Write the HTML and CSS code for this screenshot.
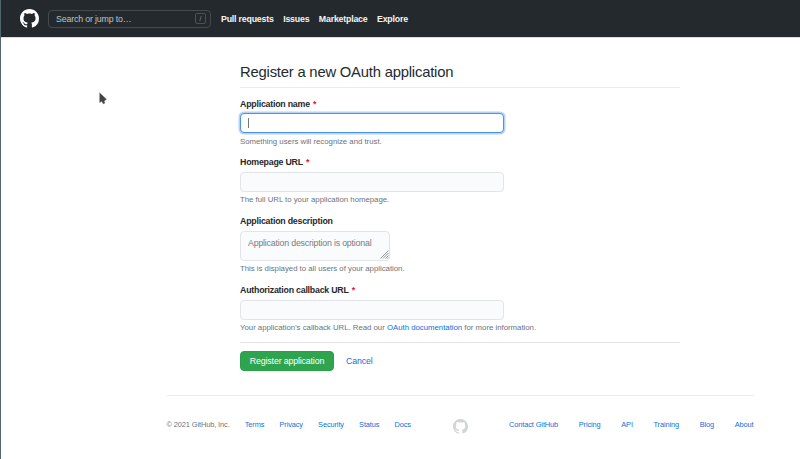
FILE: index.html
```html
<!DOCTYPE html>
<html lang="en">
<head>
<meta charset="utf-8">
<title>Register a new OAuth application</title>
<link rel="stylesheet" href="styles.css">
</head>
<body>
<svg width="0" height="0" class="defs"><symbol id="mark" viewBox="0 0 16 16"><path fill="currentColor" fill-rule="evenodd" d="M8 0C3.58 0 0 3.58 0 8c0 3.54 2.29 6.53 5.47 7.59.4.07.55-.17.55-.38 0-.19-.01-.82-.01-1.49-2.01.37-2.53-.49-2.69-.94-.09-.23-.48-.94-.82-1.13-.28-.15-.68-.52-.01-.53.63-.01 1.08.58 1.23.82.72 1.21 1.87.87 2.33.66.07-.52.28-.87.51-1.07-1.78-.2-3.64-.89-3.64-3.95 0-.87.31-1.59.82-2.15-.08-.2-.36-1.02.08-2.12 0 0 .67-.21 2.2.82.64-.18 1.32-.27 2-.27s1.36.09 2 .27c1.53-1.04 2.2-.82 2.2-.82.44 1.1.16 1.92.08 2.12.51.56.82 1.27.82 2.15 0 3.07-1.87 3.75-3.65 3.95.29.25.54.73.54 1.48 0 1.07-.01 1.93-.01 2.2 0 .21.15.46.55.38A8.01 8.01 0 0 0 16 8c0-4.42-3.58-8-8-8z"/></symbol></svg>
<header class="header">
  <svg class="logo"><use href="#mark"/></svg>
  <div class="search"><span>Search or jump to…</span><kbd>/</kbd></div>
  <nav class="nav"><a>Pull requests</a><a>Issues</a><a>Marketplace</a><a>Explore</a></nav>
</header>
<main class="form">
  <h1>Register a new OAuth application</h1>
  <section class="group first">
    <label>Application name <b>*</b></label>
    <div class="input focused"><i class="caret"></i></div>
    <p>Something users will recognize and trust.</p>
  </section>
  <section class="group">
    <label>Homepage URL <b>*</b></label>
    <div class="input"></div>
    <p>The full URL to your application homepage.</p>
  </section>
  <section class="group description">
    <label>Application description</label>
    <div class="textarea">Application description is optional
      <svg class="grip" viewBox="0 0 9 9"><path d="M0.5 8.5 8.5 .5M3 8.5 8.5 3M5.5 8.5 8.5 5.5M7.5 8.5l1-1"/></svg>
    </div>
    <p>This is displayed to all users of your application.</p>
  </section>
  <section class="group">
    <label>Authorization callback URL <b>*</b></label>
    <div class="input"></div>
    <p>Your application’s callback URL. Read our <a>OAuth documentation</a> for more information.</p>
  </section>
  <div class="actions"><button>Register application</button><a>Cancel</a></div>
</main>
<footer class="footer">
  <div class="left"><span>© 2021 GitHub, Inc.</span><a>Terms</a><a>Privacy</a><a>Security</a><a>Status</a><a>Docs</a></div>
  <svg class="footmark"><use href="#mark"/></svg>
  <div class="right"><a>Contact GitHub</a><a>Pricing</a><a>API</a><a>Training</a><a>Blog</a><a>About</a></div>
</footer>
<svg class="pointer" viewBox="0 0 8 13"><path d="M.5.5v10.2l2.2-1.2 1.5 2.6 1.8-.9-.6-2.2 2.2-1.8z"/></svg>
</body>
</html>
```
FILE: styles.css
```css
* { box-sizing: border-box; }
body {
  margin: 0;
  height: 459px;
  overflow: hidden;
  background: #fff;
  border-left: 1px solid #52676a;
  font: 8.8px/12px "Liberation Sans", Arial, sans-serif;
  letter-spacing: -.16px;
  color: #24292e;
}
.defs { position: absolute; }
a { color: #0f6fe0; white-space: nowrap; }
.header {
  height: 37px;
  margin-left: -1px;
  padding-left: 20px;
  display: flex;
  align-items: center;
  background: #24292e;
  box-shadow: 0 1px 0 #d9dbdc;
}
.logo { width: 19px; height: 19px; color: #fff; }
.search {
  width: 163px;
  height: 18px;
  margin-left: 9px;
  padding: 0 4px 0 7px;
  display: flex;
  align-items: center;
  justify-content: space-between;
  border: 1px solid #444a50;
  border-radius: 4px;
  color: #bfc2c5;
}
kbd {
  width: 11px;
  height: 11px;
  border: 1px solid #4b5156;
  border-radius: 2px;
  font: 7px/9px "Liberation Sans", sans-serif;
  text-align: center;
  color: #8c9196;
}
.nav { margin-left: 10px; display: flex; gap: 9.5px; font-weight: 700; letter-spacing: -.2px; }
.nav a { color: #f4f4f5; }
.form { width: 440px; margin: 25px 0 0 239px; }
h1 {
  height: 26px;
  margin: 0 0 10px;
  border-bottom: 1px solid #eaecef;
  font-size: 14.8px;
  line-height: 20px;
  font-weight: 400;
  letter-spacing: -.2px;
}
.group { height: 59px; }
.group.first { height: 58px; }
.group.description { height: 69px; }
label { display: block; height: 16px; font-weight: 700; letter-spacing: -.22px; }
label b { margin-left: 1px; color: #d8202f; }
.input {
  width: 264px;
  height: 20px;
  border: 1px solid #e1e4e8;
  border-radius: 4px;
  background: #fafbfc;
}
.first label { height: 15px; }
.first p { margin-top: 3px; }
.focused {
  height: 20px;
  padding: 4px 7px;
  border-color: #4a94e8;
  background: #fff;
  box-shadow: 0 0 0 1.5px #b3d3f8;
}
.caret { display: block; width: 1px; height: 10px; background: #777; }
p { margin: 2px 0 0; font-size: 7.8px; line-height: 12px; letter-spacing: -.01px; color: #6a737d; white-space: nowrap; }
.textarea {
  position: relative;
  width: 150px;
  height: 30px;
  padding: 5px 7px;
  border: 1px solid #e1e4e8;
  border-radius: 4px;
  background: #fafbfc;
  color: #757b82;
  letter-spacing: -.19px;
}
.grip { position: absolute; right: 0; bottom: 1px; width: 9px; height: 9px; fill: none; stroke: #777; stroke-width: .8; }
.actions {
  height: 29px;
  margin-top: -1px;
  padding-top: 8px;
  display: flex;
  align-items: center;
  gap: 12px;
  border-top: 1px solid #e1e4e8;
}
button {
  width: 94px;
  height: 20px;
  padding: 0;
  border: 1px solid #2a9f4a;
  border-radius: 4px;
  background: #2ea44f;
  color: #fff;
  font: inherit;
  letter-spacing: -.15px;
}
.footer {
  width: 587px;
  margin: 24px 0 0 165.5px;
  padding-top: 23px;
  display: flex;
  justify-content: space-between;
  border-top: 1px solid #eaecef;
  font-size: 7.4px;
  letter-spacing: -.1px;
  color: #6a737d;
}
.left { display: flex; gap: 15.1px; }
.right { display: flex; gap: 20.6px; }
.footmark { width: 15px; height: 15px; margin-left: 1px; color: #d1d5da; }
.pointer { position: absolute; left: 99px; top: 92px; width: 8px; height: 13px; fill: #444; stroke: #aaa; stroke-width: .4; }
```
